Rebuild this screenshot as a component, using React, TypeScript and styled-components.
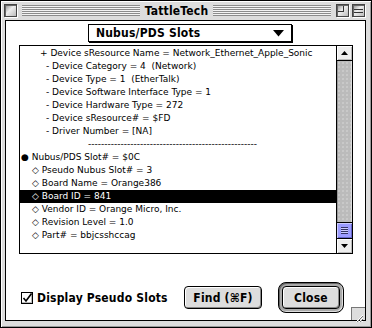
import React from 'react';
import styled, { createGlobalStyle } from 'styled-components';

const GlobalStyle = createGlobalStyle`
  html, body {
    margin: 0;
    padding: 0;
    background: #ffffff;
  }
`;

const sysFont = `"DejaVu Sans Condensed", "DejaVu Sans", sans-serif`;
const listFont = `"DejaVu Sans", "Liberation Sans", sans-serif`;

const Window = styled.div`
  width: 372px;
  height: 328px;
  box-sizing: border-box;
  border: 1px solid #000;
  background: #dddddd;
  box-shadow: inset 1px 1px 0 #ffffff, inset -1px -1px 0 #999999;
  display: flex;
  flex-direction: column;
  font-family: ${sysFont};
`;

const TitleBar = styled.div`
  height: 19px;
  display: flex;
  align-items: center;
  padding: 0 6px 0 3px;
`;

const TitleBox = styled.div`
  width: 11px;
  height: 11px;
  flex: none;
  border: 1px solid #444;
  background: linear-gradient(135deg, #888 0%, #eee 45%, #bbb 100%);
  box-shadow: 1px 1px 0 #fff, inset 1px 1px 0 #666;
  position: relative;
`;

const ZoomMark = styled.div`
  position: absolute;
  left: 1px;
  top: 1px;
  width: 5px;
  height: 5px;
  border-right: 1px solid #333;
  border-bottom: 1px solid #333;
`;

const CollapseMark = styled.div`
  position: absolute;
  left: 1px;
  right: 1px;
  top: 4px;
  height: 2px;
  border-top: 1px solid #333;
  border-bottom: 1px solid #333;
`;

const Stripes = styled.div`
  flex: 1;
  height: 11px;
  margin: 0 5px;
  background: repeating-linear-gradient(
    to bottom,
    #8c8c8c 0px,
    #8c8c8c 1px,
    #f4f4f4 1px,
    #f4f4f4 2px
  );
`;

const Title = styled.div`
  font-size: 12px;
  font-weight: bold;
  font-stretch: condensed;
  color: #000;
  letter-spacing: 0.2px;
`;

const Content = styled.div`
  flex: 1;
  margin: 0 5px 6px 4px;
  border: 1px solid #000;
  background: #ffffff;
  position: relative;
  display: flex;
  flex-direction: column;
`;

const Popup = styled.div`
  margin: 3px 0 0 82px;
  width: 204px;
  height: 18px;
  box-sizing: border-box;
  border: 1px solid #000;
  box-shadow: 1px 1px 0 #000;
  display: flex;
  align-items: center;
  padding: 0 6px 0 7px;
  font-size: 12px;
  font-weight: bold;
  font-stretch: condensed;
  letter-spacing: 0.2px;
`;

const PopupLabel = styled.span`
  flex: 1;
`;

const ListBox = styled.div`
  margin: 3px 0 0 13px;
  width: 334px;
  height: 209px;
  box-sizing: border-box;
  border: 1px solid #000;
  display: flex;
`;

const ListText = styled.div`
  flex: 1;
  padding-top: 1px;
  overflow: hidden;
  font-family: ${listFont};
  font-size: 9px;
`;

const Row = styled.div<{ indent: number; selected?: boolean }>`
  height: 13px;
  line-height: 13px;
  padding-left: ${({ indent }) => indent}px;
  white-space: pre;
  background: ${({ selected }) => (selected ? '#000' : 'transparent')};
  color: ${({ selected }) => (selected ? '#fff' : '#000')};
`;

const ScrollBar = styled.div`
  width: 15px;
  border-left: 1px solid #000;
  display: flex;
  flex-direction: column;
`;

const Arrow = styled.div<{ down?: boolean }>`
  height: 15px;
  flex: none;
  box-sizing: border-box;
  background: #eeeeee;
  border-top: ${({ down }) => (down ? '1px solid #000' : 'none')};
  border-bottom: ${({ down }) => (down ? 'none' : '1px solid #000')};
  box-shadow: inset 1px 1px 0 #fff, inset -1px -1px 0 #bbb;
  display: flex;
  align-items: center;
  justify-content: center;
`;

const Track = styled.div`
  flex: 1;
  background-color: #bbbbbb;
  background-image: radial-gradient(#d8d8d8 0.6px, transparent 0.8px);
  background-size: 4px 4px;
  box-shadow: inset 1px 0 0 #999, inset -1px 0 0 #ddd;
`;

const Thumb = styled.div`
  height: 16px;
  flex: none;
  box-sizing: border-box;
  border-top: 1px solid #000;
  background: #9c9cff;
  box-shadow: inset 1px 1px 0 #ccccff, inset -1px -1px 0 #6666cc;
  display: flex;
  align-items: center;
  justify-content: center;
`;

const Grip = styled.div`
  width: 7px;
  height: 7px;
  background: repeating-linear-gradient(
    to bottom,
    #333366 0px,
    #333366 1px,
    #ccccff 1px,
    #ccccff 2px
  );
`;

const BottomRow = styled.div`
  margin-top: 28px;
  height: 31px;
  display: flex;
  align-items: center;
  padding: 0 21px 0 15px;
`;

const CheckLabel = styled.label`
  display: flex;
  align-items: center;
  gap: 4px;
  font-size: 12px;
  font-weight: bold;
  font-stretch: condensed;
  letter-spacing: 0.2px;
`;

const CheckBox = styled.div`
  width: 12px;
  height: 12px;
  box-sizing: border-box;
  border: 1px solid #000;
  background: #fff;
  box-shadow: inset -1px -1px 0 #bbb;
  position: relative;
`;

const Button = styled.div<{ width: number }>`
  width: ${({ width }) => width}px;
  height: 23px;
  box-sizing: border-box;
  border: 1px solid #000;
  border-radius: 4px;
  background: #dddddd;
  box-shadow: inset 1px 1px 0 #fff, inset -1px -1px 0 #888;
  display: flex;
  align-items: center;
  justify-content: center;
  font-size: 12px;
  font-weight: bold;
  font-stretch: condensed;
  letter-spacing: 0.2px;
`;

const DefaultRing = styled.div`
  padding: 3px;
  border: 1px solid #000;
  border-radius: 8px;
  background: #aaaaaa;
  box-shadow: inset 1px 1px 0 #666, inset -1px -1px 0 #ddd;
  display: flex;
`;

const Spacer = styled.div`
  flex: 1;
`;

const GrowBox = styled.div`
  position: absolute;
  right: 0;
  bottom: 0;
  width: 13px;
  height: 12px;
  border-left: 1px solid #777;
  border-top: 1px solid #777;
  background: #dddddd;
`;

interface Line {
  text: string;
  indent: number;
  selected?: boolean;
}

const lines: Line[] = [
  { text: '+ Device sResource Name = Network_Ethernet_Apple_Sonic', indent: 20 },
  { text: '- Device Category = 4  (Network)', indent: 26 },
  { text: '- Device Type = 1  (EtherTalk)', indent: 26 },
  { text: '- Device Software Interface Type = 1', indent: 26 },
  { text: '- Device Hardware Type = 272', indent: 26 },
  { text: '- Device sResource# = $FD', indent: 26 },
  { text: '- Driver Number = [NA]', indent: 26 },
  { text: '-'.repeat(52), indent: 68 },
  { text: '\u25CF Nubus/PDS Slot# = $0C', indent: 1 },
  { text: '\u25C7 Pseudo Nubus Slot# = 3', indent: 12 },
  { text: '\u25C7 Board Name = Orange386', indent: 12 },
  { text: '\u25C7 Board ID = 841', indent: 12, selected: true },
  { text: '\u25C7 Vendor ID = Orange Micro, Inc.', indent: 12 },
  { text: '\u25C7 Revision Level = 1.0', indent: 12 },
  { text: '\u25C7 Part# = bbjcsshccag', indent: 12 },
];

const App: React.FC = () => {
  return (
    <>
      <GlobalStyle />
      <Window>
        <TitleBar>
          <TitleBox />
          <Stripes />
          <Title>TattleTech</Title>
          <Stripes />
          <TitleBox>
            <ZoomMark />
          </TitleBox>
          <TitleBox style={{ marginLeft: 3 }}>
            <CollapseMark />
          </TitleBox>
        </TitleBar>
        <Content>
          <Popup>
            <PopupLabel>Nubus/PDS Slots</PopupLabel>
            <svg width="12" height="7" viewBox="0 0 12 7">
              <path d="M0 0 H11 L5.5 6.5 Z" fill="#000" />
            </svg>
          </Popup>
          <ListBox>
            <ListText>
              {lines.map((l, i) => (
                <Row key={i} indent={l.indent} selected={l.selected}>
                  {l.text}
                </Row>
              ))}
            </ListText>
            <ScrollBar>
              <Arrow>
                <svg width="7" height="4" viewBox="0 0 7 4">
                  <path d="M3.5 0 L7 4 H0 Z" fill="#000" />
                </svg>
              </Arrow>
              <Track />
              <Thumb>
                <Grip />
              </Thumb>
              <Arrow down>
                <svg width="7" height="4" viewBox="0 0 7 4">
                  <path d="M0 0 H7 L3.5 4 Z" fill="#000" />
                </svg>
              </Arrow>
            </ScrollBar>
          </ListBox>
          <BottomRow>
            <CheckLabel>
              <CheckBox>
                <svg width="10" height="10" viewBox="0 0 10 10" style={{ position: 'absolute', left: 0, top: 0 }}>
                  <path d="M1.5 5 L4 8 L9.5 0.5" stroke="#000" strokeWidth="1.6" fill="none" />
                </svg>
              </CheckBox>
              Display Pseudo Slots
            </CheckLabel>
            <Spacer />
            <Button width={78}>Find (⌘F)</Button>
            <DefaultRing style={{ marginLeft: 16 }}>
              <Button width={58}>Close</Button>
            </DefaultRing>
          </BottomRow>
          <GrowBox>
            <svg width="13" height="12" viewBox="0 0 13 12">
              <path d="M4 11 L11 4 M7 11 L11 7 M10 11 L11 10" stroke="#fff" strokeWidth="1" />
              <path d="M5 11 L11 5 M8 11 L11 8" stroke="#777" strokeWidth="1" />
            </svg>
          </GrowBox>
        </Content>
      </Window>
    </>
  );
};

export default App;
